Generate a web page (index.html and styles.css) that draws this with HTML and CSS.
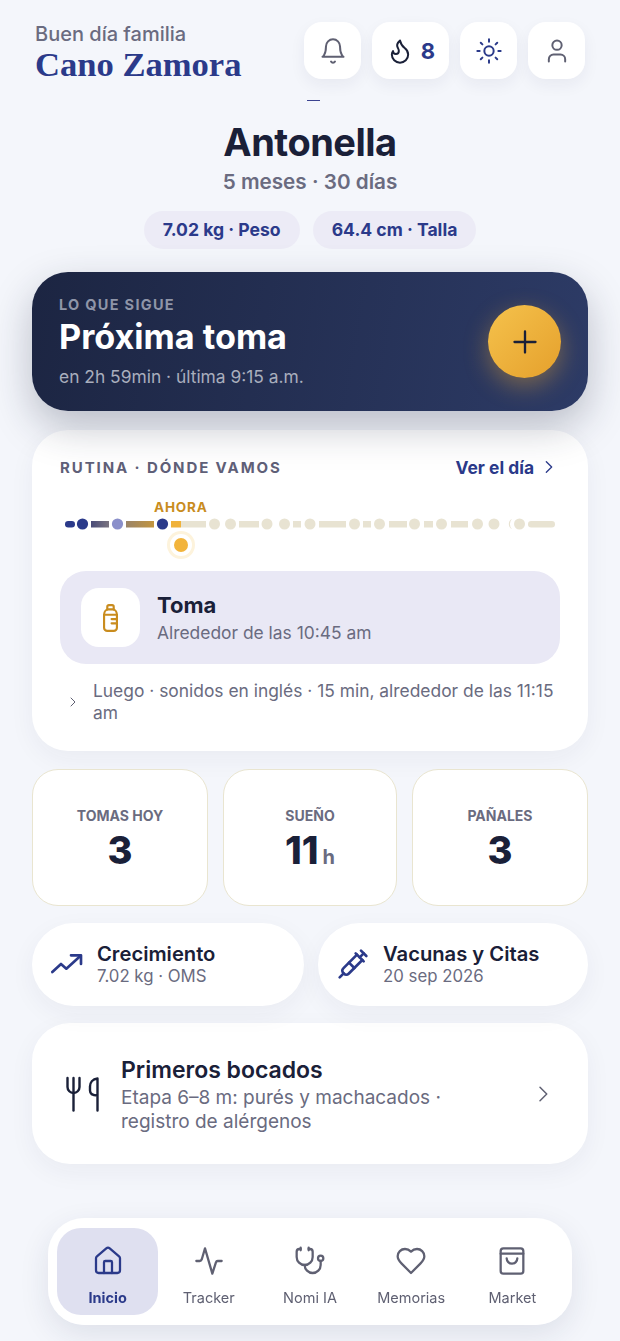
FILE: index.html
```html
<!DOCTYPE html>
<html lang="es">
<head>
    <meta charset="UTF-8">
    <meta name="viewport" content="width=device-width, initial-scale=1.0">
    <title>Inicio</title>
    <link rel="stylesheet" href="styles.css">
</head>
<body>

    <header class="top">
        <div class="greeting">
            <p class="hello">Buen día familia</p>
            <h1 class="family">Cano Zamora</h1>
        </div>
        <div class="top-actions">
            <button class="top-btn">
                <svg class="ic-top c-gray" viewBox="0 0 24 24"><path d="M6 8a6 6 0 0 1 12 0c0 7 3 9 3 9H3s3-2 3-9"/><path d="M10.3 21a1.94 1.94 0 0 0 3.4 0"/></svg>
            </button>
            <button class="top-btn streak">
                <svg class="ic-top c-dark" viewBox="0 0 24 24"><path d="M8.5 14.5A2.5 2.5 0 0 0 11 12c0-1.38-.5-2-1-3-1.072-2.143-.224-4.054 2-6 .5 2.5 2 4.9 4 6.5 2 1.6 3 3.5 3 5.5a7 7 0 1 1-14 0c0-1.153.433-2.294 1-3a2.5 2.5 0 0 0 2.5 2.5z"/></svg>
                <span>8</span>
            </button>
            <button class="top-btn">
                <svg class="ic-top c-navy" viewBox="0 0 24 24"><circle cx="12" cy="12" r="4"/><path d="M12 2v2M12 20v2M4.93 4.93l1.41 1.41M17.66 17.66l1.41 1.41M2 12h2M20 12h2M6.34 17.66l-1.41 1.41M19.07 4.93l-1.41 1.41"/></svg>
            </button>
            <button class="top-btn">
                <svg class="ic-top c-gray" viewBox="0 0 24 24"><path d="M19 21v-2a4 4 0 0 0-4-4H9a4 4 0 0 0-4 4v2"/><circle cx="12" cy="7" r="4"/></svg>
            </button>
        </div>
    </header>

    <div class="avatar-edge"></div>

    <section class="baby">
        <h2>Antonella</h2>
        <p class="age">5 meses · 30 días</p>
        <div class="pills">
            <span class="pill">7.02 kg · Peso</span>
            <span class="pill">64.4 cm · Talla</span>
        </div>
    </section>

    <section class="next">
        <div>
            <p class="next-tag">LO QUE SIGUE</p>
            <h3>Próxima toma</h3>
            <p class="next-sub">en 2h 59min · última 9:15 a.m.</p>
        </div>
        <button class="fab">
            <svg class="ic-24 c-dark" viewBox="0 0 24 24"><path d="M12 3v18M3 12h18"/></svg>
        </button>
    </section>

    <section class="card routine">
        <div class="routine-head">
            <span class="routine-title">RUTINA · DÓNDE VAMOS</span>
            <a class="day-link">Ver el día
                <svg class="ic-16 c-navy" viewBox="0 0 24 24"><path d="m8 4 8 8-8 8"/></svg>
            </a>
        </div>

        <div class="now">AHORA</div>
        <svg class="track" viewBox="0 0 500 42" width="500" height="42">
            <defs>
                <linearGradient id="seg1"><stop offset="0" stop-color="#4a4c78"/><stop offset="1" stop-color="#7a7480"/></linearGradient>
                <linearGradient id="seg2"><stop offset="0" stop-color="#9a8468"/><stop offset="1" stop-color="#c2953f"/></linearGradient>
            </defs>
            <rect x="0" y="3" width="10" height="6.5" rx="3.2" fill="#2b3a8a"/>
            <circle cx="17.5" cy="6" r="5.6" fill="#2b3a8a"/>
            <rect x="26" y="3" width="18" height="6.5" fill="url(#seg1)"/>
            <circle cx="52.5" cy="6" r="5.6" fill="#8a8fca"/>
            <rect x="61" y="3" width="28" height="6.5" fill="url(#seg2)"/>
            <circle cx="97.5" cy="6" r="5.6" fill="#2b3a8a"/>
            <rect x="106" y="3" width="10" height="6.5" fill="#f0b23a"/>
            <g fill="#e8e3d2">
                <rect x="116" y="3" width="25" height="6.5"/>
                <circle cx="149.5" cy="6" r="5.5"/>
                <circle cx="165.5" cy="6" r="5.5"/>
                <rect x="174" y="3" width="20" height="6.5"/>
                <circle cx="202" cy="6" r="5.5"/>
                <circle cx="219.5" cy="6" r="5.5"/>
                <rect x="228" y="3" width="8" height="6.5"/>
                <circle cx="245" cy="6" r="5.5"/>
                <rect x="254" y="3" width="27" height="6.5"/>
                <circle cx="289.5" cy="6" r="5.5"/>
                <rect x="298" y="3" width="8" height="6.5"/>
                <circle cx="314.5" cy="6" r="5.5"/>
                <rect x="324" y="3" width="18" height="6.5"/>
                <circle cx="349.5" cy="6" r="5.5"/>
                <rect x="359" y="3" width="9" height="6.5"/>
                <circle cx="376.5" cy="6" r="5.5"/>
                <rect x="386" y="3" width="17" height="6.5"/>
                <circle cx="412.5" cy="6" r="5.5"/>
                <circle cx="429" cy="6" r="5.5"/>
                <path d="M447 1a5.500 5.500 0 0 0 0 10a7 7 0 0 1 0-10z"/>
                <circle cx="454.5" cy="6" r="5.5"/>
                <rect x="463" y="3" width="27" height="6.5" rx="3.2"/>
            </g>
            <circle cx="116" cy="27" r="14" fill="#fdf3dc"/>
            <circle cx="116" cy="27" r="11" fill="#fff"/>
            <circle cx="116" cy="27" r="7" fill="#f2b43c"/>
        </svg>

        <div class="current">
            <div class="current-icon">
                <svg viewBox="0 0 14 26" width="15" height="28"><path d="M4 5V2.500A1.500 1.500 0 0 1 5.500 1h3A1.500 1.500 0 0 1 10 2.500V5"/><path d="M1 10c0-3 2-5 4-5h4c2 0 4 2 4 5v12a3 3 0 0 1-3 3H4a3 3 0 0 1-3-3z"/><path d="M1 10h12M8 14h5M8 18h5"/></svg>
            </div>
            <div>
                <p class="current-name">Toma</p>
                <p class="current-time">Alrededor de las 10:45 am</p>
            </div>
        </div>

        <div class="later">
            <svg class="ic-12 c-gray" viewBox="0 0 24 24"><path d="m8 4 8 8-8 8"/></svg>
            <p>Luego · sonidos en inglés · 15 min, alrededor de las 11:15 am</p>
        </div>
    </section>

    <section class="stats">
        <div class="stat">
            <span class="stat-label">TOMAS HOY</span>
            <span class="stat-value">3</span>
        </div>
        <div class="stat">
            <span class="stat-label">SUEÑO</span>
            <span class="stat-value">11<small>h</small></span>
        </div>
        <div class="stat">
            <span class="stat-label">PAÑALES</span>
            <span class="stat-value">3</span>
        </div>
    </section>

    <section class="links">
        <div class="card link-card">
            <svg class="ic-30 c-navy" viewBox="0 0 24 24"><path d="M1 18l6.500-6 4 3.500L22 6"/><path d="M15 5.500h7.500V12"/></svg>
            <div>
                <p class="link-title">Crecimiento</p>
                <p class="link-sub">7.02 kg · OMS</p>
            </div>
        </div>
        <div class="card link-card">
            <svg class="ic-30 c-navy" viewBox="0 0 24 24"><path d="m18 2 4 4"/><path d="m17 7 3-3"/><path d="M19 9 8.700 19.300c-1 1-2.500 1-3.400 0l-.6-.6c-1-1-1-2.500 0-3.400L15 5"/><path d="m9 11 4 4"/><path d="m5 19-3 3"/><path d="m14 4 6 6"/></svg>
            <div>
                <p class="link-title">Vacunas y Citas</p>
                <p class="link-sub">20 sep 2026</p>
            </div>
        </div>
    </section>

    <section class="card food">
        <svg class="food-icon" viewBox="0 0 33 36" width="33" height="36"><path d="M1.500 2v9a6 6 0 0 0 6 6 6 6 0 0 0 6-6V2"/><path d="M7.500 2v32.500"/><path d="M31.500 34.500V2.500c-5 .5-7.500 4-7.500 8v4c0 3 2 5 7.500 5"/></svg>
        <div class="food-text">
            <p class="food-title">Primeros bocados</p>
            <p class="food-sub">Etapa 6–8 m: purés y machacados · registro de alérgenos</p>
        </div>
        <svg class="ic-18 c-gray" viewBox="0 0 24 24"><path d="m8 3 9 9-9 9"/></svg>
    </section>

    <nav class="tabbar">
        <a class="tab active">
            <svg class="ic-tab" viewBox="0 0 24 24"><path d="M15 21v-8a1 1 0 0 0-1-1h-4a1 1 0 0 0-1 1v8"/><path d="M3 10a2 2 0 0 1 .709-1.528l7-5.999a2 2 0 0 1 2.582 0l7 5.999A2 2 0 0 1 21 10v9a2 2 0 0 1-2 2H5a2 2 0 0 1-2-2z"/></svg>
            <span>Inicio</span>
        </a>
        <a class="tab">
            <svg class="ic-tab" viewBox="0 0 24 24"><path d="M2.500 12H5c.800 0 1.300-.5 1.600-1.300L9 2.500l5.500 19 2.700-8.500c.2-.6.700-1 1.300-1h3"/></svg>
            <span>Tracker</span>
        </a>
        <a class="tab">
            <svg class="ic-tab" viewBox="0 0 24 24"><path d="M11 2v2"/><path d="M5 2v2"/><path d="M5 3H4a2 2 0 0 0-2 2v4a6 6 0 0 0 12 0V5a2 2 0 0 0-2-2h-1"/><path d="M8 15a6 6 0 0 0 12 0v-3"/><circle cx="20" cy="10" r="2"/></svg>
            <span>Nomi IA</span>
        </a>
        <a class="tab">
            <svg class="ic-tab" viewBox="0 0 24 24"><path d="M19 14c1.490-1.460 3-3.210 3-5.500A5.500 5.500 0 0 0 16.500 3c-1.760 0-3 .5-4.500 2-1.500-1.500-2.740-2-4.500-2A5.500 5.500 0 0 0 2 8.500c0 2.300 1.500 4.050 3 5.500l7 7Z"/></svg>
            <span>Memorias</span>
        </a>
        <a class="tab">
            <svg class="ic-tab" viewBox="0 0 24 24"><path d="M5.500 2.500h13a2 2 0 0 1 2 2v15a2 2 0 0 1-2 2h-13a2 2 0 0 1-2-2v-15a2 2 0 0 1 2-2z"/><path d="M3.500 6.500h17"/><path d="M16 10a4 4 0 0 1-8 0"/></svg>
            <span>Market</span>
        </a>
    </nav>

</body>
</html>
```

FILE: styles.css
```css
* {
    box-sizing: border-box;
}
body {
    font-family: Inter, "Noto Sans", sans-serif;
    background: #f4f6fb;
    margin: 0;
    padding: 22px 32px 0;
    color: #1a2038;
    height: 1341px;
    overflow: hidden;
}
p, h1, h2, h3 {
    margin: 0;
}
svg {
    fill: none;
    stroke: currentColor;
    stroke-width: 2;
    stroke-linecap: round;
    stroke-linejoin: round;
    flex-shrink: 0;
}
.ic-12 { width: 12px; height: 12px; }
.ic-16 { width: 16px; height: 16px; }
.ic-18 { width: 18px; height: 18px; }
.ic-24 { width: 24px; height: 24px; }
.ic-30 { width: 32px; height: 32px; }
.ic-top { width: 28px; height: 28px; stroke-width: 1.7; }
.ic-tab { width: 32px; height: 32px; stroke-width: 1.7; }
.c-gray { color: #5f6072; }
.c-dark { color: #1a2038; }
.c-navy { color: #2b3a8a; }

/* top */
.top {
    display: flex;
    justify-content: space-between;
    align-items: flex-start;
    height: 57px;
}
.greeting {
    padding: 1px 0 0 3px;
}
.hello {
    font-size: 20px;
    font-weight: 500;
    line-height: 22px;
    color: #6a6b80;
}
.family {
    font-family: "Liberation Serif", serif;
    font-size: 34.6px;
    font-weight: 700;
    line-height: 38px;
    color: #2b3a8a;
}
.top-actions {
    display: flex;
    gap: 11px;
    margin-right: 3px;
}
.top-btn {
    width: 57px;
    height: 57px;
    border: none;
    border-radius: 18px;
    background: #fff;
    display: flex;
    align-items: center;
    justify-content: center;
    padding: 0;
    box-shadow: 0 6px 16px rgba(30, 40, 80, 0.06);
}
.streak {
    width: 77px;
    gap: 7px;
    font-family: inherit;
    font-size: 22px;
    font-weight: 700;
    color: #2b3a8a;
}
.avatar-edge {
    width: 13px;
    height: 1px;
    margin: 21px 0 0 275px;
    background: #3b4390;
}

/* baby */
.baby {
    text-align: center;
    margin-top: 19px;
}
.baby h2 {
    font-size: 38px;
    font-weight: 700;
    line-height: 44px;
    letter-spacing: -0.5px;
}
.age {
    font-size: 20.7px;
    font-weight: 600;
    line-height: 24px;
    margin-top: 6px;
    color: #6a6b80;
}
.pills {
    display: flex;
    justify-content: center;
    gap: 13px;
    margin-top: 17px;
}
.pill {
    height: 38px;
    line-height: 38px;
    padding: 0 19px;
    border-radius: 19px;
    background: #ecebf6;
    color: #2b3a8a;
    font-size: 17.6px;
    font-weight: 700;
}

/* next */
.next {
    position: relative;
    z-index: 1;
    height: 139px;
    margin-top: 23px;
    padding: 0 27px;
    border-radius: 36px;
    background: linear-gradient(100deg, #1c2542, #2d3b66);
    box-shadow: 0 16px 40px rgba(28, 37, 64, 0.27);
    display: flex;
    align-items: center;
    justify-content: space-between;
    color: #fff;
}
.next-tag {
    font-size: 14.5px;
    font-weight: 700;
    letter-spacing: 1.3px;
    line-height: 17px;
    color: #8f95a8;
}
.next h3 {
    font-size: 34.2px;
    font-weight: 700;
    line-height: 40px;
    margin-top: 4px;
}
.next-sub {
    font-size: 17.4px;
    line-height: 20px;
    margin-top: 10px;
    color: #a9aebd;
}
.fab {
    width: 73px;
    height: 73px;
    border: none;
    border-radius: 50%;
    background: linear-gradient(135deg, #f5c24c, #e5a02c);
    box-shadow: 0 8px 24px rgba(240, 170, 50, 0.4);
    display: flex;
    align-items: center;
    justify-content: center;
    padding: 0;
}
.fab svg {
    width: 28px;
    height: 28px;
}

/* cards */
.card {
    background: #fff;
    box-shadow: 0 8px 26px rgba(30, 40, 80, 0.05);
}
.routine {
    height: 321px;
    margin-top: 19px;
    padding: 27px 28px 0;
    border-radius: 36px;
}
.routine-head {
    display: flex;
    justify-content: space-between;
    align-items: center;
    height: 20px;
}
.routine-title {
    font-size: 15px;
    font-weight: 700;
    letter-spacing: 1.9px;
    color: #5f6078;
}
.day-link {
    display: flex;
    align-items: center;
    gap: 7px;
    font-size: 17.4px;
    font-weight: 700;
    color: #2b3a8a;
    margin-right: 3px;
}
.now {
    margin: 22px 0 0 94px;
    font-size: 13.5px;
    font-weight: 700;
    line-height: 16px;
    letter-spacing: 0.8px;
    color: #c98c1e;
}
.track {
    display: block;
    margin: 3px 0 0 5px;
    stroke: none;
}
.current {
    display: flex;
    align-items: center;
    gap: 17px;
    height: 93px;
    margin-top: 11px;
    padding: 0 21px;
    border-radius: 26px;
    background: #e9e8f5;
}
.current-icon {
    width: 59px;
    height: 59px;
    border-radius: 18px;
    background: #fff;
    display: flex;
    align-items: center;
    justify-content: center;
    color: #c98c1e;
}
.current-name {
    font-size: 22px;
    font-weight: 700;
    line-height: 28px;
}
.current-time {
    font-size: 17.4px;
    line-height: 22px;
    margin-top: 3px;
    color: #6a6b80;
}
.later {
    display: flex;
    align-items: center;
    gap: 14px;
    margin-top: 16px;
    padding-left: 7px;
    font-size: 17.4px;
    line-height: 22px;
    color: #6a6b80;
}

/* stats */
.stats {
    display: grid;
    grid-template-columns: 176px 174px 176px;
    gap: 15px;
    margin-top: 18px;
}
.stat {
    height: 137px;
    padding-top: 37px;
    border-radius: 26px;
    background: #fff;
    border: 1.5px solid #e9e5d0;
    display: flex;
    flex-direction: column;
    align-items: center;
}
.stat-label {
    font-size: 14px;
    font-weight: 700;
    line-height: 18px;
    color: #6a6b80;
}
.stat-value {
    font-size: 38px;
    font-weight: 800;
    line-height: 46px;
    margin-top: 2px;
}
.stat-value small {
    font-size: 20px;
    font-weight: 700;
    margin-left: 4px;
    color: #6a6b80;
}

/* links */
.links {
    display: grid;
    grid-template-columns: 272px 270px;
    gap: 14px;
    margin-top: 17px;
}
.link-card {
    height: 83px;
    border-radius: 42px;
    display: flex;
    align-items: center;
    gap: 14px;
    padding: 0 0 2px 19px;
}
.link-title {
    font-size: 20.2px;
    font-weight: 600;
    line-height: 24px;
}
.link-sub {
    font-size: 16.8px;
    line-height: 20px;
    color: #6a6b80;
}

/* food */
.food {
    height: 141px;
    margin-top: 17px;
    border-radius: 38px;
    display: flex;
    align-items: center;
    padding: 0 36px 0 34px;
}
.food-icon {
    stroke-width: 2.4;
    color: #1a2038;
    margin-right: 22px;
}
.food-text {
    flex: 1;
    padding: 3px 40px 0 0;
}
.food-title {
    font-size: 23px;
    font-weight: 600;
    line-height: 28px;
}
.food-sub {
    font-size: 19px;
    line-height: 24px;
    margin-top: 2px;
    color: #6a6b80;
}

/* tab bar, floats over the page */
.tabbar {
    position: fixed;
    left: 48px;
    bottom: 16px;
    width: 524px;
    height: 107px;
    padding: 10px 9px 10px;
    border-radius: 36px;
    background: rgba(255, 255, 255, 0.92);
    box-shadow: 0 10px 30px rgba(30, 40, 80, 0.1);
    display: grid;
    grid-template-columns: repeat(5, 1fr);
    gap: 0;
}
.tab {
    border-radius: 24px;
    display: flex;
    flex-direction: column;
    align-items: center;
    padding-top: 17px;
    gap: 12px;
    color: #5f6072;
    font-size: 14.5px;
    line-height: 18px;
}
.tab.active {
    background: #dfe0f0;
    color: #2b3a8a;
    font-weight: 700;
}
```
